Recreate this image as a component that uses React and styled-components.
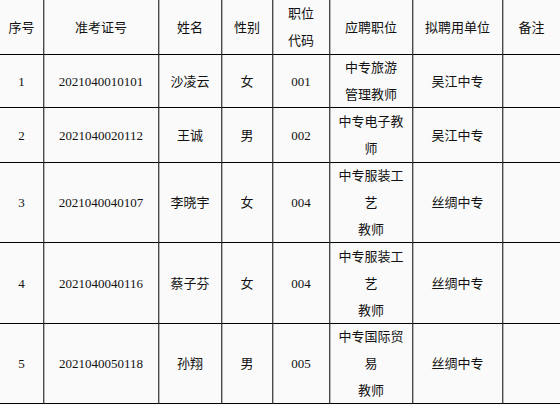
import React from "react";
import styled, { createGlobalStyle } from "styled-components";

const Global = createGlobalStyle`
  html, body { margin: 0; padding: 0; background: #fafafa; }
  body {
    font-family: "Liberation Serif", "Noto Sans CJK SC", serif;
    color: #111;
  }
`;

const Grid = styled.div`
  display: grid;
  width: 560px;
  grid-template-columns: 44px 115px 63px 51px 57px 83px 90px 1fr;
  grid-template-rows: 55px 53px 55px 80px 81px 80px;
  background: #fafafa;
`;

const Cell = styled.div`
  display: flex;
  flex-direction: column;
  align-items: center;
  justify-content: center;
  text-align: center;
  font-size: 13px;
  line-height: 27px;
  border-bottom: 1px solid #000;
  border-right: ${(p) => (p.$last ? "none" : "1px solid #4a4a4a")};
  box-shadow: ${(p) => (p.$last ? "none" : "1px 0 0 #b5b5b5")};
  white-space: nowrap;
  overflow: visible;
`;

const Line = styled.span`
  display: block;
`;

const headers = [
  ["序号"],
  ["准考证号"],
  ["姓名"],
  ["性别"],
  ["职位", "代码"],
  ["应聘职位"],
  ["拟聘用单位"],
  ["备注"],
];

const rows = [
  ["1", "2021040010101", "沙凌云", "女", "001", ["中专旅游", "管理教师"], "吴江中专", ""],
  ["2", "2021040020112", "王诚", "男", "002", ["中专电子教", "师"], "吴江中专", ""],
  ["3", "2021040040107", "李晓宇", "女", "004", ["中专服装工", "艺", "教师"], "丝绸中专", ""],
  ["4", "2021040040116", "蔡子芬", "女", "004", ["中专服装工", "艺", "教师"], "丝绸中专", ""],
  ["5", "2021040050118", "孙翔", "男", "005", ["中专国际贸", "易", "教师"], "丝绸中专", ""],
];

function render(v) {
  const lines = Array.isArray(v) ? v : [v];
  return lines.map((l, i) => <Line key={i}>{l}</Line>);
}

export default function App() {
  return (
    <>
      <Global />
      <Grid>
        {headers.map((h, i) => (
          <Cell key={"h" + i} $last={i === 7}>
            {render(h)}
          </Cell>
        ))}
        {rows.map((r, ri) =>
          r.map((c, ci) => (
            <Cell key={ri + "-" + ci} $last={ci === 7}>
              {render(c)}
            </Cell>
          ))
        )}
      </Grid>
    </>
  );
}
